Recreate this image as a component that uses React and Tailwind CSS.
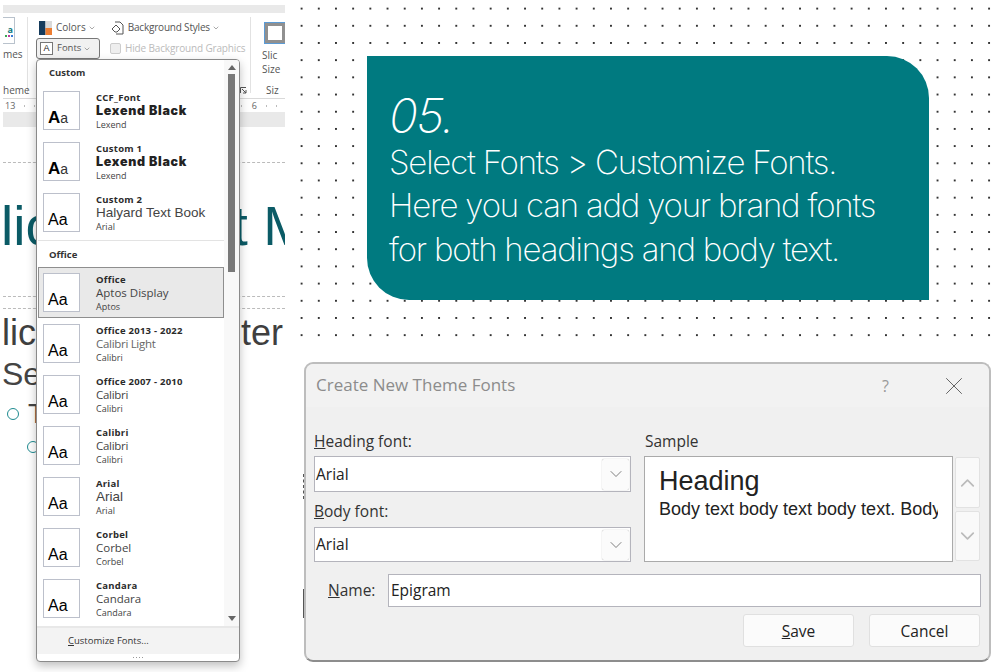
import { ChevronDown, ChevronUp, X } from "lucide-react";

const customFonts = [
  { label: "CCF_Font", head: "Lexend Black", body: "Lexend", bold: true },
  { label: "Custom 1", head: "Lexend Black", body: "Lexend", bold: true },
  { label: "Custom 2", head: "Halyard Text Book", body: "Arial", arial: true },
];

const officeFonts = [
  { label: "Office", head: "Aptos Display", body: "Aptos", active: true },
  { label: "Office 2013 - 2022", head: "Calibri Light", body: "Calibri", light: true, narrow: true },
  { label: "Office 2007 - 2010", head: "Calibri", body: "Calibri", narrow: true },
  { label: "Calibri", head: "Calibri", body: "Calibri", narrow: true },
  { label: "Arial", head: "Arial", body: "Arial", arial: true },
  { label: "Corbel", head: "Corbel", body: "Corbel" },
  { label: "Candara", head: "Candara", body: "Candara" },
];

function FontRow({ font }) {
  return (
    <div className={`flex h-[51px] w-[186px] shrink-0 items-center pl-[4px] ${font.active ? "mx-[1px] border border-[#8e8e8e] bg-[#e9e9e9]" : "ml-[2px]"}`}>
      <div className="flex h-[39px] w-[37px] shrink-0 items-end border border-[#bcc0cb] bg-white pb-[3px] pl-[4px] font-['Liberation_Sans',sans-serif] text-[16px] leading-none text-black">
        {font.bold ? (
          <span>
            <span className="text-[17px] font-black">A</span>
            <span className="text-[14px] font-light text-[#333]">a</span>
          </span>
        ) : (
          <span>Aa</span>
        )}
      </div>
      <div className="ml-[16px] flex flex-col text-[#333]">
        <span className="text-[9.5px] leading-[12px] font-bold tracking-[0.25px] text-[#2b2b2b]">{font.label}</span>
        {font.bold ? (
          <span className="font-['Inter',sans-serif] text-[12.5px] leading-[14px] font-black tracking-[0.7px] text-[#222]">{font.head}</span>
        ) : font.arial ? (
          <span className="font-['Liberation_Sans',sans-serif] text-[13.5px] leading-[14px] text-[#444]">{font.head}</span>
        ) : (
          <span className={`text-[11.5px] leading-[14px] ${font.light ? "text-[#666]" : "text-[#444]"} ${font.narrow ? "tracking-[-0.3px]" : ""}`}>{font.head}</span>
        )}
        <span className="mt-[1px] text-[9px] leading-[11px] text-[#444]">{font.body}</span>
      </div>
    </div>
  );
}

function FontsMenu() {
  return (
    <div className="absolute top-[59px] left-[36px] flex h-[603px] w-[204px] flex-col overflow-hidden rounded-[4px] border border-[#8a8a8a] bg-white font-['Open_Sans',sans-serif] shadow-[0_4px_10px_rgba(0,0,0,0.25)]">
      <div className="flex min-h-0 flex-1">
        <div className="min-w-0 flex-1">
          <div className="flex h-[25px] items-center pt-[2px] pl-[12px] text-[9.5px] font-bold text-[#333]">Custom</div>
          {customFonts.map((font, i) => (
            <FontRow key={i} font={font} />
          ))}
          <div className="mt-[2px] ml-[1px] h-px w-[186px] bg-[#e3e3e3]" />
          <div className="flex h-[26px] items-center pt-[2px] pl-[12px] text-[9.5px] font-bold text-[#333]">Office</div>
          {officeFonts.map((font, i) => (
            <FontRow key={i} font={font} />
          ))}
        </div>
        <div className="flex w-[15px] shrink-0 flex-col items-center bg-[#f8f8f8] pt-[5px] pb-[5px]">
          <svg width="8" height="5" viewBox="0 0 8 5"><path d="M4 0 8 5H0Z" fill="#666" /></svg>
          <div className="mt-[4px] h-[198px] w-[7px] bg-[#797979]" />
          <svg className="mt-auto" width="8" height="5" viewBox="0 0 8 5"><path d="M0 0h8L4 5Z" fill="#666" /></svg>
        </div>
      </div>
      <div className="flex h-[28px] shrink-0 items-center border-t-2 border-[#e8e8e8] bg-[#f3f3f3] pl-[31px] text-[9.5px] text-[#333]">
        <span><span className="underline">C</span>ustomize Fonts...</span>
      </div>
      <div className="flex h-[7px] shrink-0 items-center justify-center gap-[2px]">
        {[0, 1, 2, 3].map((i) => (
          <span key={i} className="h-px w-px bg-[#999]" />
        ))}
      </div>
    </div>
  );
}

function RibbonPane() {
  return (
    <div className="relative h-full w-[293px] shrink-0 overflow-hidden">
      <div className="w-[285px] overflow-hidden">
        <div className="mt-[5px] ml-[3px] h-[8px] bg-[#e9e9e9]" />
        <div className="ml-[3px] flex h-[85px] font-['Open_Sans',sans-serif] text-[10px] text-[#555]">
          <div className="mt-[4px] mb-[5px] flex w-[25px] flex-col border-r border-[#e2e2e2]">
            <div className="flex h-[27px] w-[12px] flex-col items-end justify-center border-y border-r border-[#b9c2cc] pr-[1px]">
              <span className="text-[9px] leading-[10px] font-bold text-[#127a80]">a</span>
              <span className="flex gap-px">
                <span className="h-[2px] w-[2px] bg-[#3aa655]" />
                <span className="h-[2px] w-[2px] bg-[#c0399f]" />
                <span className="h-[2px] w-[2px] bg-[#3a7bd5]" />
              </span>
            </div>
            <div className="mt-[3px] leading-[14px]">mes</div>
            <div className="mt-auto mb-[-3px] leading-[12px]">heme</div>
          </div>
          <div className="mt-[4px] mb-[5px] flex w-[228px] flex-col border-r border-[#e2e2e2] pl-[8px]">
            <div className="flex h-[21px] items-center pl-[3px]">
              <svg width="13" height="14" viewBox="0 0 13 14">
                <rect width="6.5" height="14" fill="#153b5c" />
                <rect x="6.5" width="6.5" height="7" fill="#d9d9d9" />
                <rect x="6.5" y="7" width="6.5" height="7" fill="#ed7d31" />
              </svg>
              <span className="ml-[4px]">Colors</span>
              <ChevronDown className="ml-[2px]" size={8} strokeWidth={1.5} />
              <svg className="ml-[15px]" width="13" height="14" viewBox="0 0 13 14" fill="none" stroke="#555">
                <path d="M4 1h5l3 3v9H5" />
                <path d="M1 8l4-4 4 4-3 3H4Z" />
              </svg>
              <span className="ml-[4px] tracking-[-0.2px]">Background Styles</span>
              <ChevronDown className="ml-[2px]" size={8} strokeWidth={1.5} />
            </div>
            <div className="flex h-[21px] items-center">
              <div className="flex h-[21px] w-[64px] shrink-0 items-center rounded-[3px] border border-[#777] bg-[#f1f1f1] pl-[3px]">
                <span className="flex h-[13px] w-[13px] items-center justify-center border border-[#777] bg-white font-['Liberation_Sans',sans-serif] text-[9px] text-[#222]">A</span>
                <span className="ml-[4px] text-[9.5px]">Fonts</span>
                <ChevronDown className="ml-[2px]" size={8} strokeWidth={1.5} />
              </div>
              <div className="ml-[10px] h-[11px] w-[11px] shrink-0 rounded-[2px] border border-[#ccc] bg-[#eee]" />
              <span className="ml-[4px] tracking-[-0.15px] whitespace-nowrap text-[#bbb]">Hide Background Graphics</span>
            </div>
            <svg className="mt-auto mr-[3px] mb-[-1px] ml-auto" width="7" height="7" viewBox="0 0 7 7" fill="none" stroke="#555">
              <path d="M.5 6V.5H6M2 2l4 4M6 3v3H3" />
            </svg>
          </div>
          <div className="mt-[10px] mb-[2px] flex flex-col pl-[11px] leading-[14px]">
            <div className="mb-[5px] ml-[3px] h-[20px] w-[20px] shrink-0 border-[3px] border-[#909090] outline outline-[#5b9bd5]" />
            <span>Slic</span>
            <span>Size</span>
            <span className="mt-auto pl-[4px] leading-[12px]">Siz</span>
          </div>
        </div>
        <div className="ml-[3px] flex h-[14px] items-center border-t border-[#d9d9d9] pt-[1px] pl-[2px] font-['Open_Sans',sans-serif] text-[9px] text-[#666]">
          <span>13</span>
          <span className="ml-[9px] h-[2px] w-px bg-[#bbb]" />
          <span className="ml-[9px] h-[2px] w-px bg-[#bbb]" />
          <span className="mr-[10px] ml-auto h-[2px] w-px bg-[#bbb]" />
          <span>6</span>
          <span className="mx-[9px] h-[2px] w-px bg-[#bbb]" />
          <span className="mr-[8px] h-[2px] w-px bg-[#bbb]" />
        </div>
        <div className="ml-[3px] h-[15px] bg-[#e9e9e9]" />
        <div className="mt-[35px] ml-[3px] border-t border-dashed border-[#bbb]" />
        <div className="mt-[32px] flex h-[62px] justify-between font-['Liberation_Sans',sans-serif] text-[55px] leading-[62px] text-[#0b5b66]">
          <span className="pl-[1px]">lic</span>
          <span className="mr-[-24px]">t M</span>
        </div>
        <div className="mt-[39px] ml-[3px] border-t border-dashed border-[#bbb]" />
        <div className="mt-[11px] ml-[3px] border-t border-dashed border-[#bbb]" />
        <div className="mt-[2px] flex justify-between px-[2px] font-['Liberation_Sans',sans-serif] text-[36px] leading-[44px] text-[#3f3f3f]">
          <span>lic</span>
          <span>ter</span>
        </div>
        <div className="pl-[2px] font-['Liberation_Sans',sans-serif] text-[32px] leading-[38px] text-[#444]">Se</div>
        <div className="mt-[4px] flex items-center pl-[7px] font-['Liberation_Sans',sans-serif] text-[28px] leading-[34px] text-[#444]">
          <span className="h-[12px] w-[12px] rounded-full border-[1.5px] border-[#1e8b90]" />
          <span className="ml-[9px]">T</span>
        </div>
        <div className="mt-[10px] ml-[27px] h-[12px] w-[12px] rounded-full border-[1.5px] border-[#1e8b90]" />
      </div>
      <FontsMenu />
    </div>
  );
}

function Select({ heightClass }) {
  return (
    <div className={`flex items-center justify-between border border-[#b4b4bc] bg-white pr-[1px] pl-[1px] ${heightClass}`}>
      <span className="pt-[1px] text-[15.5px] text-[#222]">Arial</span>
      <div className="flex h-[calc(100%-3px)] w-[27px] items-center justify-center rounded-[2px] bg-[#fbfbfb] shadow-[0_0_1px_rgba(0,0,0,0.4)]">
        <ChevronDown size={20} strokeWidth={1} className="text-[#666]" />
      </div>
    </div>
  );
}

function ThemeDialog() {
  return (
    <div className="relative ml-[11px] flex h-[300px] w-[687px] flex-col rounded-[9px] border-2 border-[#bdbdbd] border-b-[#8d8d8d] bg-[#f0f0f0] font-['Open_Sans',sans-serif] text-[15.5px]">
      <div className="flex h-[43px] shrink-0 items-center justify-between rounded-t-[8px] bg-[#f2f2f2] pr-[20px] pl-[10px]">
        <span className="mb-[2px] text-[17px] text-[#8c8c8c]">Create New Theme Fonts</span>
        <div className="flex items-center">
          <span className="mr-[50px] text-[16px] text-[#999]">?</span>
          <X size={30} strokeWidth={0.8} className="text-[#666]" />
        </div>
      </div>
      <div className="flex pt-[24px] pl-[8px]">
        <div className="w-[317px]">
          <div className="mb-[5px] h-[20px] leading-[20px] text-[#333]"><span className="underline">H</span>eading font:</div>
          <Select heightClass="h-[36px]" />
          <div className="mt-[9px] mb-[6px] h-[20px] leading-[20px] text-[#333]"><span className="underline">B</span>ody font:</div>
          <Select heightClass="h-[35px]" />
        </div>
        <div className="ml-[13px]">
          <div className="mb-[5px] h-[20px] pl-[1px] leading-[20px] text-[#333]">Sample</div>
          <div className="flex">
            <div className="h-[106px] w-[309px] overflow-hidden border border-[#aaa] bg-white pt-[9px] pl-[14px] font-['Liberation_Sans',sans-serif] text-[#222]">
              <div className="text-[27px] leading-[31px]">Heading</div>
              <div className="w-[279px] overflow-hidden text-[18px] leading-[24px] whitespace-nowrap">Body text body text body text. Body</div>
            </div>
            <div className="ml-[2px] flex w-[25px] flex-col gap-[3px] pt-[1px]">
              <div className="flex h-[51px] items-center justify-center rounded-[2px] border border-[#e2e2e2] bg-[#f9f9f9]">
                <ChevronUp size={24} strokeWidth={1.8} className="text-[#bbb]" />
              </div>
              <div className="flex h-[50px] items-center justify-center rounded-[2px] border border-[#e2e2e2] bg-[#f9f9f9]">
                <ChevronDown size={24} strokeWidth={1.8} className="text-[#bbb]" />
              </div>
            </div>
          </div>
        </div>
      </div>
      <div className="mt-[12px] flex h-[32px] items-center pl-[22px]">
        <span className="w-[60px] pt-[1px] text-[#333]"><span className="underline">N</span>ame:</span>
        <div className="flex h-[33px] w-[593px] items-center border border-[#b4b4bc] bg-white pt-[1px] pl-[2px] text-[#222]">Epigram</div>
      </div>
      <div className="mt-[8px] flex justify-end gap-[15px] pr-[9px]">
        <div className="flex h-[33px] w-[111px] items-center justify-center rounded-[3px] border border-[#e0e0e0] bg-[#fbfbfb] pt-[2px] text-[#222]"><span><span className="underline">S</span>ave</span></div>
        <div className="flex h-[33px] w-[111px] items-center justify-center rounded-[3px] border border-[#e0e0e0] bg-[#fbfbfb] pt-[2px] text-[#222]">Cancel</div>
      </div>
      {/* slide bits peeking out behind the dialog */}
      <div className="absolute top-[110px] left-[-3px] h-[25px] w-px border-l border-dashed border-[#555]" />
      <div className="absolute top-[225px] left-[-3px] h-[29px] w-px bg-[#555]" />
    </div>
  );
}

export default function App() {
  return (
    <div className="flex h-[672px] w-[1000px] overflow-hidden bg-white">
      <RibbonPane />
      <div className="min-w-0 flex-1">
        <div className="h-[346px] bg-[radial-gradient(circle,#333_0.7px,transparent_1.1px)] bg-[size:17.2px_17.2px] pt-[56px] pl-[74px]">
          <div className="h-[244px] w-[562px] rounded-tr-[42px] rounded-bl-[42px] bg-[#007a80] pt-[34px] pl-[22px] font-['Inter',sans-serif] text-white">
            <div className="text-[48px] leading-[51px] font-extralight tracking-[-1.5px] italic">05.</div>
            <div className="text-[33px] leading-[43.3px] font-extralight tracking-[-1.2px]">
              Select Fonts &gt; Customize Fonts.
              <br />
              Here you can add your brand fonts
              <br />
              for both headings and body text.
            </div>
          </div>
        </div>
        <div className="mt-[16px]">
          <ThemeDialog />
        </div>
      </div>
    </div>
  );
}
